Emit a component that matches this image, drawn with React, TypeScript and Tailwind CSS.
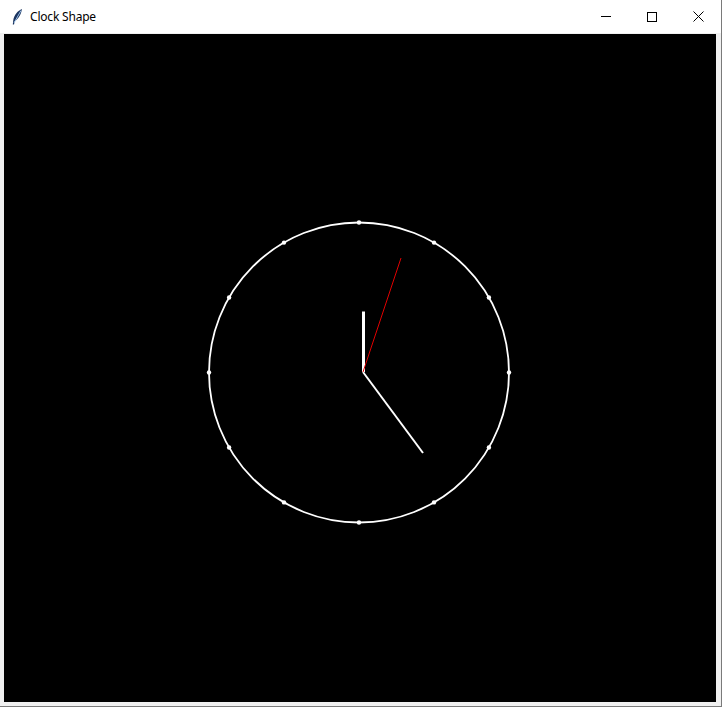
export default function App() {
  const cx = 360;
  const cy = 372.5;
  const r = 150;
  const dots = Array.from({ length: 12 }, (_, i) => {
    const a = (i * Math.PI) / 6;
    return { x: cx + r * Math.sin(a), y: cy - r * Math.cos(a) };
  });

  return (
    <div className="w-[722px] h-[707px] flex flex-col bg-white border-r border-b border-[#7a7a7a] overflow-hidden font-['Noto_Sans',sans-serif]">
      {/* title bar */}
      <div className="h-[33px] flex items-center shrink-0 bg-white">
        <svg width="16" height="18" viewBox="0 0 16 18" className="ml-[9px]">
          <path d="M13 1 C9 2.5 5 7 4.3 12 L3.8 16.5 L5 16.5 L5.8 13 C9.5 11 12 6.5 13 1 Z" fill="#1b3560" />
          <path d="M12 2.5 L5 15" stroke="#a8cdf2" strokeWidth="0.9" />
        </svg>
        <span className="ml-[5px] text-[12px] tracking-[-0.2px] text-black leading-none">Clock Shape</span>
        <div className="ml-auto flex h-full">
          <div className="w-[46px] h-full flex items-center justify-center">
            <div className="w-[10px] h-px bg-black" />
          </div>
          <div className="w-[46px] h-full flex items-center justify-center">
            <div className="w-[10px] h-[10px] border border-black" />
          </div>
          <div className="w-[46px] h-full flex items-center justify-center">
            <svg width="11" height="11" viewBox="0 0 11 11">
              <path d="M0.5 0.5 L10.5 10.5 M10.5 0.5 L0.5 10.5" stroke="#000" strokeWidth="1" />
            </svg>
          </div>
        </div>
      </div>

      {/* body */}
      <div className="flex-1 bg-[#f0f0f0] pl-[4px] pr-[5px] pt-px pb-[4px] flex">
        <div className="flex-1 bg-black">
          <svg width="712" height="668" viewBox="5 34 712 668">
            <circle cx={cx} cy={cy} r={r} fill="none" stroke="#fff" strokeWidth="1.8" />
            {dots.map((d, i) => (
              <circle key={i} cx={d.x} cy={d.y} r="2.2" fill="#fff" />
            ))}
            <line x1="364.5" y1="372" x2="364.5" y2="311.5" stroke="#fff" strokeWidth="3" />
            <line x1="364" y1="372" x2="424" y2="453" stroke="#fff" strokeWidth="2" />
            <line x1="364" y1="372" x2="402" y2="258" stroke="#e00000" strokeWidth="1" />
          </svg>
        </div>
      </div>
    </div>
  );
}
